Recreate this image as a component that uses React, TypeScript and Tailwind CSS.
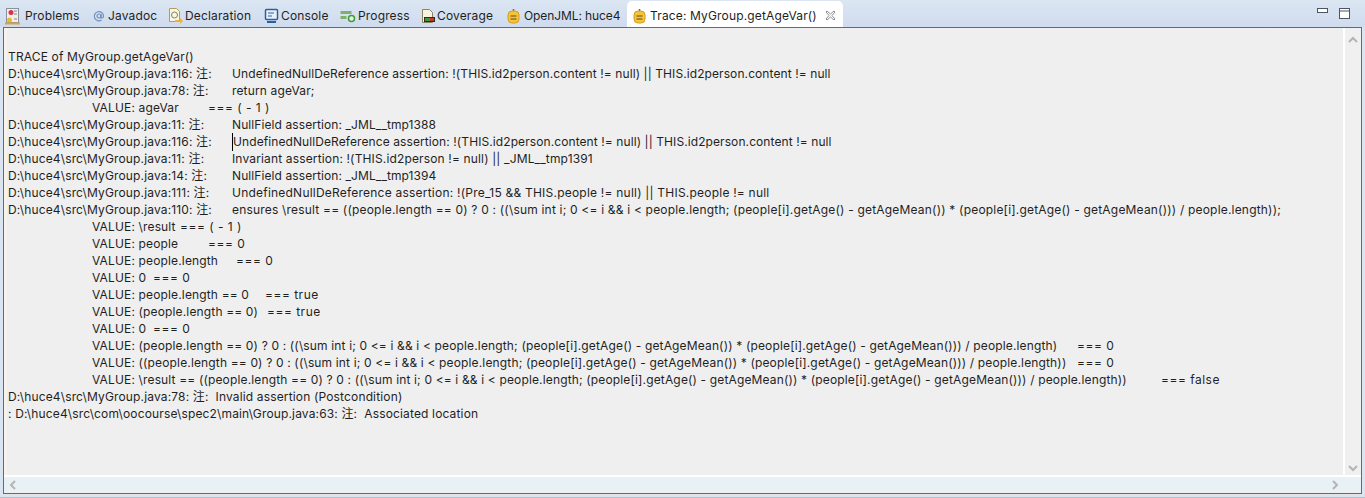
const FONT = "font-['Inter','Noto_Sans_CJK_SC',sans-serif]";

function ProblemsIcon() {
  return (
    <svg width="16" height="18" viewBox="0 0 16 18">
      <rect x="1.500" y="1.500" width="12" height="14" fill="#f4eee6" stroke="#8a8f9c" />
      <circle cx="6" cy="5.500" r="2.500" fill="#d8324a" />
      <circle cx="4.500" cy="13" r="2.500" fill="#e8b93c" />
      <path d="M9 4h3M9 7h3M9 12h3" stroke="#6d86a8" />
      <path d="M0 16.500h15" stroke="#d9a441" strokeWidth="2" />
    </svg>
  );
}

function JavadocIcon() {
  return (
    <svg width="14" height="14" viewBox="0 0 14 14" fill="none" stroke="#6f8fc0" strokeWidth="1.200">
      <circle cx="7" cy="7" r="2" />
      <path d="M9 5v3c0 1.500 2.500 1.500 2.500-1A4.600 4.600 0 1 0 9.500 11" />
    </svg>
  );
}

function DeclarationIcon() {
  return (
    <svg width="16" height="18" viewBox="0 0 16 18">
      <path d="M2.500 1.500h7l3 3v10h-10z" fill="#fbf4df" stroke="#b89a5e" />
      <circle cx="7.500" cy="8" r="3" fill="none" stroke="#6f8a70" />
      <path d="M8 13h5v-2l3 3-3 3v-2H8z" fill="#eeb23c" />
    </svg>
  );
}

function ConsoleIcon() {
  return (
    <svg width="16" height="16" viewBox="0 0 16 16">
      <rect x="1.500" y="1.500" width="12" height="10" rx="1" fill="#e9f0fa" stroke="#2c5f9e" strokeWidth="1.500" />
      <path d="M4 5h6M4 8h4" stroke="#2c5f9e" />
      <path d="M3 14h9" stroke="#2c5f9e" strokeWidth="2" />
    </svg>
  );
}

function ProgressIcon() {
  return (
    <svg width="16" height="14" viewBox="0 0 16 14">
      <rect x="0.500" y="2" width="11" height="3" fill="#7fb069" />
      <rect x="0.500" y="7" width="6" height="3" fill="#7fb069" />
      <circle cx="11.500" cy="9.500" r="3" fill="#e6f3da" stroke="#3f9a3f" strokeWidth="1.500" />
    </svg>
  );
}

function CoverageIcon() {
  return (
    <svg width="16" height="16" viewBox="0 0 16 16">
      <path d="M2.500 1.500h7l3 3v10h-10z" fill="#f8f3df" stroke="#8a8465" />
      <rect x="4" y="9" width="11" height="5" fill="#2b2b20" />
      <rect x="5" y="10" width="5" height="3" fill="#3c9a3c" />
      <rect x="10" y="10" width="4" height="3" fill="#c23a2b" />
    </svg>
  );
}

function JmlIcon() {
  return (
    <svg width="13" height="16" viewBox="0 0 13 16">
      <path d="M6.500 1v2" stroke="#8a6a1c" strokeWidth="1.500" />
      <rect x="1" y="3" width="11" height="12" rx="4" fill="#f3c53a" stroke="#d89c20" />
      <path d="M3.500 8h6M3.500 11h6" stroke="#6b4a10" />
    </svg>
  );
}

const tabs = [
  { label: 'Problems', icon: <ProblemsIcon />, w: 'w-[88px]', gap: 'gap-[4px]', pl: 'pl-[5px]' },
  { label: 'Javadoc', icon: <JavadocIcon />, w: 'w-[75px]', gap: 'gap-[2px]', pl: 'pl-[4px]' },
  { label: 'Declaration', icon: <DeclarationIcon />, w: 'w-[97px]', gap: 'gap-[2px]', pl: 'pl-[4px]' },
  { label: 'Console', icon: <ConsoleIcon />, w: 'w-[76px]', gap: 'gap-[1px]', pl: 'pl-[4px]' },
  { label: 'Progress', icon: <ProgressIcon />, w: 'w-[80px]', gap: 'gap-[2px]', pl: 'pl-[4px]' },
  { label: 'Coverage', icon: <CoverageIcon />, w: 'w-[87px]', gap: 'gap-[1px]', pl: 'pl-[4px]' },
  { label: 'OpenJML: huce4', icon: <JmlIcon />, w: 'w-[124px] tracking-[-0.1px]', gap: 'gap-[4px]', pl: 'pl-[4px]' },
];

type Line =
  | { kind: 'plain'; text: string }
  | { kind: 'value'; text: string; eq: string; w: string }
  | { kind: 'loc'; loc: string; text: string; caret?: boolean; track?: string };

const ternary = '(people.length == 0) ? 0 : ((\\sum int i; 0 <= i && i < people.length; (people[i].getAge() - getAgeMean()) * (people[i].getAge() - getAgeMean())) / people.length)';

const lines: Line[] = [
  { kind: 'plain', text: 'TRACE of MyGroup.getAgeVar()' },
  { kind: 'loc', loc: 'D:\\huce4\\src\\MyGroup.java:116: 注:', text: 'UndefinedNullDeReference assertion: !(THIS.id2person.content != null) || THIS.id2person.content != null', track: 'tracking-[0.09px]' },
  { kind: 'loc', loc: 'D:\\huce4\\src\\MyGroup.java:78: 注:', text: 'return ageVar;' },
  { kind: 'value', text: 'VALUE: ageVar', eq: '=== ( - 1 )', w: 'w-[116px]' },
  { kind: 'loc', loc: 'D:\\huce4\\src\\MyGroup.java:11: 注:', text: 'NullField assertion: _JML__tmp1388', track: 'tracking-[0.09px]' },
  { kind: 'loc', loc: 'D:\\huce4\\src\\MyGroup.java:116: 注:', text: 'UndefinedNullDeReference assertion: !(THIS.id2person.content != null) || THIS.id2person.content != null', caret: true, track: 'tracking-[0.09px]' },
  { kind: 'loc', loc: 'D:\\huce4\\src\\MyGroup.java:11: 注:', text: 'Invariant assertion: !(THIS.id2person != null) || _JML__tmp1391' },
  { kind: 'loc', loc: 'D:\\huce4\\src\\MyGroup.java:14: 注:', text: 'NullField assertion: _JML__tmp1394', track: 'tracking-[0.09px]' },
  { kind: 'loc', loc: 'D:\\huce4\\src\\MyGroup.java:111: 注:', text: 'UndefinedNullDeReference assertion: !(Pre_15 && THIS.people != null) || THIS.people != null', track: 'tracking-[0.22px]' },
  { kind: 'loc', loc: 'D:\\huce4\\src\\MyGroup.java:110: 注:', text: `ensures \\result == (${ternary});`, track: 'tracking-[0.19px]' },
  { kind: 'value', text: 'VALUE: \\result', eq: '=== ( - 1 )', w: 'w-[88px]' },
  { kind: 'value', text: 'VALUE: people', eq: '=== 0', w: 'w-[116px]' },
  { kind: 'value', text: 'VALUE: people.length', eq: '=== 0', w: 'w-[144px]' },
  { kind: 'value', text: 'VALUE: 0', eq: '=== 0', w: 'w-[61px]' },
  { kind: 'value', text: 'VALUE: people.length == 0', eq: '=== true', w: 'w-[173px]' },
  { kind: 'value', text: 'VALUE: (people.length == 0)', eq: '=== true', w: 'w-[175px]' },
  { kind: 'value', text: 'VALUE: 0', eq: '=== 0', w: 'w-[61px]' },
  { kind: 'value', text: `VALUE: ${ternary}`, eq: '=== 0', w: 'w-[985px]' },
  { kind: 'value', text: `VALUE: (${ternary})`, eq: '=== 0', w: 'w-[985px]' },
  { kind: 'value', text: `VALUE: \\result == (${ternary})`, eq: '=== false', w: 'w-[1069px]' },
  { kind: 'plain', text: 'D:\\huce4\\src\\MyGroup.java:78: 注:  Invalid assertion (Postcondition)' },
  { kind: 'plain', text: ': D:\\huce4\\src\\com\\oocourse\\spec2\\main\\Group.java:63: 注:  Associated location' },
];

function TraceLine({ line }: { line: Line }) {
  if (line.kind === 'loc') {
    return (
      <div className="flex h-[17px] items-center whitespace-pre">
        <span className="w-[224px] shrink-0">{line.loc}</span>
        <span className={`${line.caret ? 'border-l border-black' : ''} ${line.track ?? ''}`}>{line.text}</span>
      </div>
    );
  }
  if (line.kind === 'value') {
    return (
      <div className="flex h-[17px] items-center whitespace-pre pl-[84px]">
        <span className={`shrink-0 ${line.w}`}>{line.text}</span>
        <span className="shrink-0 tracking-[0.5px]">{line.eq}</span>
      </div>
    );
  }
  return <div className="h-[17px] leading-[17px] whitespace-pre">{line.text}</div>;
}

export default function App() {
  return (
    <div className={`flex h-[498px] w-[1365px] flex-col overflow-hidden bg-[#dbe5f1] text-[12px] tracking-[0.15px] text-[#1f1f1f] [font-feature-settings:'calt'_0] ${FONT}`}>
      <div className="flex h-[27px] shrink-0 items-end bg-gradient-to-b from-[#dce6f3] to-[#cfdcee]">
        {tabs.map((t) => (
          <div key={t.label} className={`flex h-[26px] shrink-0 items-center pt-[3px] ${t.w} ${t.gap} ${t.pl}`}>
            {t.icon}
            <span className="whitespace-pre">{t.label}</span>
          </div>
        ))}
        <div className="flex h-[26px] w-[216px] shrink-0 items-center rounded-t-[5px] bg-white pl-[6px] pt-[3px]">
          <JmlIcon />
          <span className="ml-[4px] whitespace-pre">Trace: MyGroup.getAgeVar()</span>
          <svg className="ml-[8px]" width="11" height="11" viewBox="0 0 11 11" fill="none" stroke="#8e8e8e">
            <path d="M1 2l1-1 3.500 3L9 1l1 1-3 3.500L10 9l-1 1-3.500-3L2 10 1 9l3-3.500z" />
          </svg>
        </div>
        <div className="flex-1" />
        <div className="flex h-[26px] items-start gap-[11px] pr-[15px] pt-[7px]">
          <svg width="11" height="6" viewBox="0 0 11 6" fill="#fff" stroke="#4b5563">
            <rect x="0.500" y="0.500" width="10" height="4" />
          </svg>
          <svg width="11" height="11" viewBox="0 0 11 11" fill="#fff" stroke="#4b5563">
            <rect x="0.500" y="0.500" width="10" height="10" />
            <path d="M0.500 3h10" />
          </svg>
        </div>
      </div>

      <div className="ml-[3px] mr-[3px] flex min-h-0 flex-1 flex-col border border-[#3c7a94] bg-[#efefef]">
        <div className="flex min-h-0 flex-1 border-b-2 border-white">
          <div className="min-w-0 flex-1 overflow-hidden border-l-[3px] border-[#f6f3ee] pl-[1px] pt-[20px]">
            {lines.map((l, i) => (
              <TraceLine key={i} line={l} />
            ))}
          </div>
          <div className="flex w-[18px] shrink-0 flex-col items-center justify-between border-l-2 border-white bg-[#f0f0f0] pb-[3px] pt-[8px]">
            <svg width="10" height="7" viewBox="0 0 10 7" fill="none" stroke="#b4b4b4" strokeWidth="2"><path d="M1 6l4-4 4 4" /></svg>
            <svg width="10" height="7" viewBox="0 0 10 7" fill="none" stroke="#b4b4b4" strokeWidth="2"><path d="M1 1l4 4 4-4" /></svg>
          </div>
        </div>
        <div className="flex h-[16px] shrink-0 items-center justify-between border-y border-[#f6eee4] bg-[#e8f1f6] pl-[5px] pr-[22px]">
          <svg width="7" height="10" viewBox="0 0 7 10" fill="none" stroke="#b4b4b4" strokeWidth="2"><path d="M6 1L2 5l4 4" /></svg>
          <svg width="7" height="10" viewBox="0 0 7 10" fill="none" stroke="#b4b4b4" strokeWidth="2"><path d="M1 1l4 4-4 4" /></svg>
        </div>
      </div>
      <div className="h-[4px] shrink-0 border-b border-[#b9bec4]" />
    </div>
  );
}
